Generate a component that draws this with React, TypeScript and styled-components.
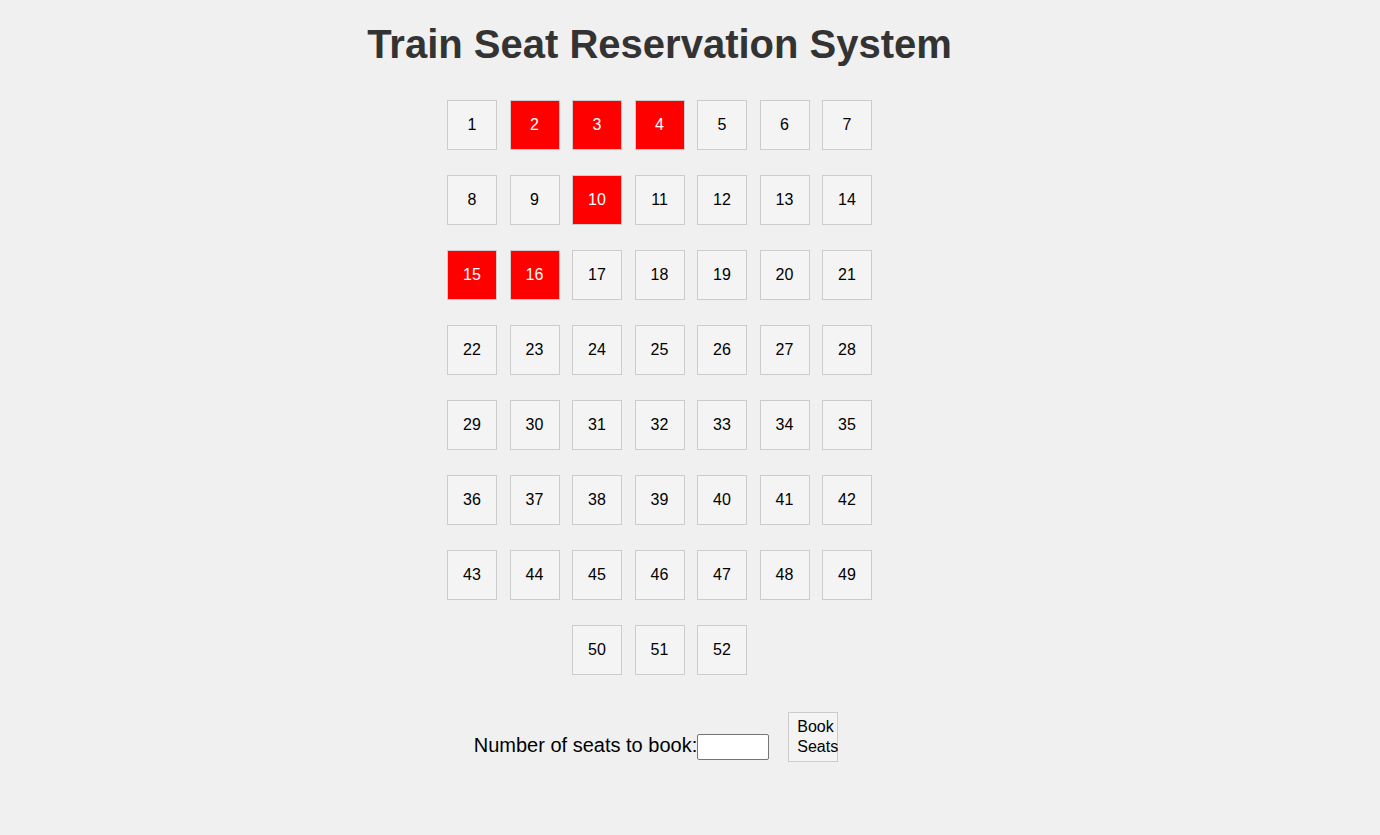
import React from 'react'
import { createGlobalStyle, styled } from 'styled-components'

const GlobalStyle = createGlobalStyle`
  html, body {
    margin: 0;
    padding: 0;
    background: #f0f0f0;
    font-family: "Liberation Sans", Arial, sans-serif;
  }
`;

const Page = styled.div`
  width: 1319px;
  padding-top: 22px;
  text-align: center;
`;

const Title = styled.h1`
  margin: 0;
  font-size: 40px;
  font-weight: bold;
  color: #333;
`;

const SeatGrid = styled.div`
  display: flex;
  flex-wrap: wrap;
  justify-content: center;
  gap: 25px 12.5px;
  width: 425px;
  margin: 33px auto 0;
`;

const Seat = styled.div<{ $booked?: boolean }>`
  width: 50px;
  height: 50px;
  box-sizing: border-box;
  display: flex;
  align-items: center;
  justify-content: center;
  border: 1px solid #ccc;
  background: ${p => (p.$booked ? '#ff0000' : '#f4f4f4')};
  color: ${p => (p.$booked ? '#fff' : '#000')};
  font-size: 16px;
`;

const BookingRow = styled.div`
  margin-top: 37px;
  font-size: 20px;
  color: #000;
`;

const Label = styled.label`
  font-size: 20px;
`;

const SeatInput = styled.input`
  width: 72px;
  height: 26px;
  box-sizing: border-box;
  padding: 2px 2px 0;
  border: 1px solid #767676;
  border-radius: 2px;
  background: #fff;
  font-size: 13.33px;
  vertical-align: baseline;
`;

const BookButton = styled.button`
  width: 50px;
  height: 50px;
  box-sizing: border-box;
  margin: 0 7px 0 19px;
  padding: 0 8px;
  border: 1px solid #ccc;
  background: #f4f4f4;
  color: #000;
  font-family: "Liberation Sans", Arial, sans-serif;
  font-size: 16px;
  line-height: 20px;
  vertical-align: baseline;
  cursor: pointer;
`;

const booked = [2, 3, 4, 10, 15, 16];
const seats = Array.from({ length: 52 }, (_, i) => i + 1);

export default function App() {
  return (
    <Page>
      <GlobalStyle />
      <Title>Train Seat Reservation System</Title>
      <SeatGrid>
        {seats.map(n => (
          <Seat key={n} $booked={booked.includes(n)}>{n}</Seat>
        ))}
      </SeatGrid>
      <BookingRow>
        <Label htmlFor="count">Number of seats to book:</Label>
        <SeatInput id="count" type="number" />
        <BookButton>Book Seats</BookButton>
      </BookingRow>
    </Page>
  )
}
